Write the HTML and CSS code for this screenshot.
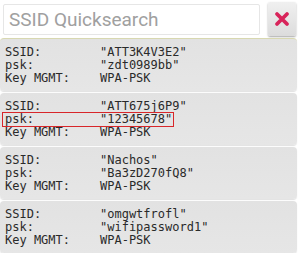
FILE: index.html
```html
<!DOCTYPE html>
<html lang="en">
<head>
    <meta charset="UTF-8">
    <meta name="viewport" content="width=device-width, initial-scale=1.0">
    <title>SSID Quicksearch</title>
    <link rel="stylesheet" href="styles.css">
</head>
<body>
    <div class="search-bar">
        <input type="text" class="search-input" placeholder="SSID Quicksearch">
        <button class="clear-btn" type="button">
            <svg width="16" height="16" viewBox="0 0 16 16">
                <path d="M3 3 L13 13 M13 3 L3 13" stroke="#d8245a" stroke-width="3.8" stroke-linecap="round"/>
            </svg>
        </button>
    </div>

    <div class="network-list">
        <div class="network">
            <span class="key">SSID:</span><span class="val">"ATT3K4V3E2"</span>
            <span class="key">psk:</span><span class="val">"zdt0989bb"</span>
            <span class="key">Key MGMT:</span><span class="val">WPA-PSK</span>
        </div>
        <div class="network">
            <span class="key">SSID:</span><span class="val">"ATT675j6P9"</span>
            <div class="highlight"><span class="key">psk:</span><span class="val">"12345678"</span></div>
            <span class="key">Key MGMT:</span><span class="val">WPA-PSK</span>
        </div>
        <div class="network">
            <span class="key">SSID:</span><span class="val">"Nachos"</span>
            <span class="key">psk:</span><span class="val">"Ba3zD270fQ8"</span>
            <span class="key">Key MGMT:</span><span class="val">WPA-PSK</span>
        </div>
        <div class="network">
            <span class="key">SSID:</span><span class="val">"omgwtfrofl"</span>
            <span class="key">psk:</span><span class="val">"wifipassword1"</span>
            <span class="key">Key MGMT:</span><span class="val">WPA-PSK</span>
        </div>
    </div>
</body>
</html>
```

FILE: styles.css
```css
body {
    margin: 0;
    background-color: #ffffff;
    font-family: "DejaVu Sans Mono", monospace;
}

.search-bar {
    display: flex;
    align-items: center;
    gap: 8px;
    padding: 2px 4px 0 3px;
    height: 34px;
}

.search-input {
    flex: 1;
    height: 31px;
    box-sizing: border-box;
    border: 1px solid #e6e6e6;
    border-radius: 2px;
    padding: 0 5px;
    font-family: Roboto, "Noto Sans", sans-serif;
    font-size: 19px;
    color: #333;
    outline: none;
}

.search-input::placeholder {
    color: #a0a0a0;
}

.clear-btn {
    width: 34px;
    height: 34px;
    border: none;
    border-radius: 2px;
    background: linear-gradient(#f0f0f0, #dcdcdc);
    box-shadow: 0 1px 2px rgba(0, 0, 0, 0.35);
    display: flex;
    align-items: center;
    justify-content: center;
    padding: 0;
}

.network-list {
    display: flex;
    flex-direction: column;
    gap: 2px;
    padding: 2px 3px 0 0;
}

.network {
    display: grid;
    grid-template-columns: 95px auto;
    align-content: center;
    height: 52px;
    padding-left: 5px;
    background: linear-gradient(#e2e2e2, #e6e6e6);
    border-radius: 4px;
    box-shadow: 0 1px 1px rgba(0, 0, 0, 0.12);
    font-size: 12px;
    line-height: 13px;
    color: #2a2a2a;
}

.network:first-child {
    border-top: 1px solid #d8d8b0;
}

.highlight {
    grid-column: 1 / 3;
    display: grid;
    grid-template-columns: 95px auto;
    justify-self: start;
    margin-left: -3px;
    padding-left: 2px;
    padding-right: 1px;
    border: 1px solid #d8262a;
    margin-top: -1px;
    margin-bottom: -1px;
}
```
